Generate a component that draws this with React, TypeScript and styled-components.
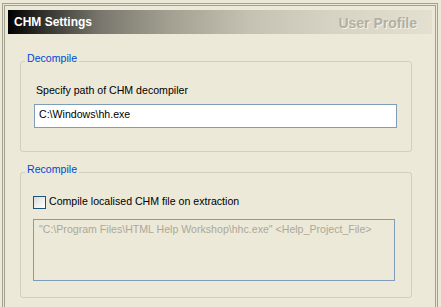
import styled, { createGlobalStyle } from "styled-components";

const GlobalStyle = createGlobalStyle`
  html, body {
    margin: 0;
    padding: 0;
    background: #ece9d8;
    overflow: hidden;
  }
  body {
    font-family: "Liberation Sans", Arial, sans-serif;
    font-size: 10.6px;
    color: #000;
  }
`;

const Frame = styled.div`
  margin: 3px 3px 0 2px;
  height: calc(100vh - 3px);
  border: 3px double #a3a090;
  border-bottom: none;
  padding: 4px 3px 0 3px;
  box-sizing: border-box;
  overflow: hidden;
`;

const Banner = styled.div`
  height: 24px;
  display: flex;
  align-items: center;
  justify-content: space-between;
  padding: 0 15px 0 6px;
  background: linear-gradient(
    to right,
    #000 0%,
    #3a3a35 10%,
    #7a786e 22%,
    #a3a092 38%,
    #c5c2b3 57%,
    #d6d3c4 76%,
    #e3e0d0 100%
  );
`;

const Title = styled.span`
  font-weight: bold;
  font-size: 12px;
  color: #fff;
  line-height: 14px;
`;

const Page = styled.span`
  font-weight: bold;
  font-size: 14px;
  color: #b3b0a1;
  text-shadow: 1px 1px 0 #f4f2e8;
  line-height: 16px;
  margin-top: 1px;
`;

const Content = styled.div`
  display: flex;
  flex-direction: column;
  gap: 11px;
  padding: 18px 20px 0 12px;
`;

const Group = styled.fieldset<{ $bottom: number }>`
  margin: 0;
  padding: 0 0 ${({ $bottom }) => $bottom}px 0;
  min-width: 0;
  border: 1px solid #d0d0bf;
  border-radius: 3px;
`;

const Legend = styled.legend`
  margin-left: 4px;
  padding: 0 2px 5px 2px;
  line-height: 13px;
  color: #0046d5;
`;

const Label = styled.div`
  margin-top: 14px;
  padding-left: 15px;
  line-height: 13px;
`;

const Field = styled.div<{ $left: number; $right: number; $top: number }>`
  padding: 0 ${({ $right }) => $right}px 0 ${({ $left }) => $left}px;
  margin-top: ${({ $top }) => $top}px;
`;

const TextInput = styled.input`
  display: block;
  width: 100%;
  height: 24px;
  box-sizing: border-box;
  margin: 0;
  padding: 0 4px 4px 4px;
  border: 1px solid #7f9db9;
  background: #fff;
  font-family: "Liberation Sans", Arial, sans-serif;
  font-size: 10.6px;
  line-height: 13px;
  color: #000;
  outline: none;
`;

const CheckRow = styled.label`
  display: flex;
  align-items: center;
  gap: 3px;
  margin-top: 15px;
  padding-left: 12px;
  height: 13px;
  line-height: 13px;
`;

const Box = styled.span`
  width: 13px;
  height: 13px;
  box-sizing: border-box;
  border: 1px solid #1c5180;
  background: linear-gradient(135deg, #dcdcd7 0%, #f2f2ee 60%, #fff 100%);
  flex: none;
`;

const CheckText = styled.span`
  margin-top: -2px;
`;

const CommandArea = styled.div`
  height: 62px;
  box-sizing: border-box;
  border: 1px solid #7f9db9;
  padding: 3px 5px;
  line-height: 13px;
  color: #aca899;
  white-space: nowrap;
  overflow: hidden;
`;

export default function App() {
  return (
    <>
      <GlobalStyle />
      <Frame>
        <Banner>
          <Title>CHM Settings</Title>
          <Page>User Profile</Page>
        </Banner>
        <Content>
          <Group $bottom={23}>
            <Legend>Decompile</Legend>
            <Label>Specify path of CHM decompiler</Label>
            <Field $left={13} $right={14} $top={7}>
              <TextInput defaultValue="C:\Windows\hh.exe" />
            </Field>
          </Group>
          <Group $bottom={16}>
            <Legend>Recompile</Legend>
            <CheckRow>
              <Box />
              <CheckText>Compile localised CHM file on extraction</CheckText>
            </CheckRow>
            <Field $left={12} $right={16} $top={10}>
              <CommandArea>
                "C:\Program Files\HTML Help Workshop\hhc.exe" &lt;Help_Project_File&gt;
              </CommandArea>
            </Field>
          </Group>
        </Content>
      </Frame>
    </>
  );
}
